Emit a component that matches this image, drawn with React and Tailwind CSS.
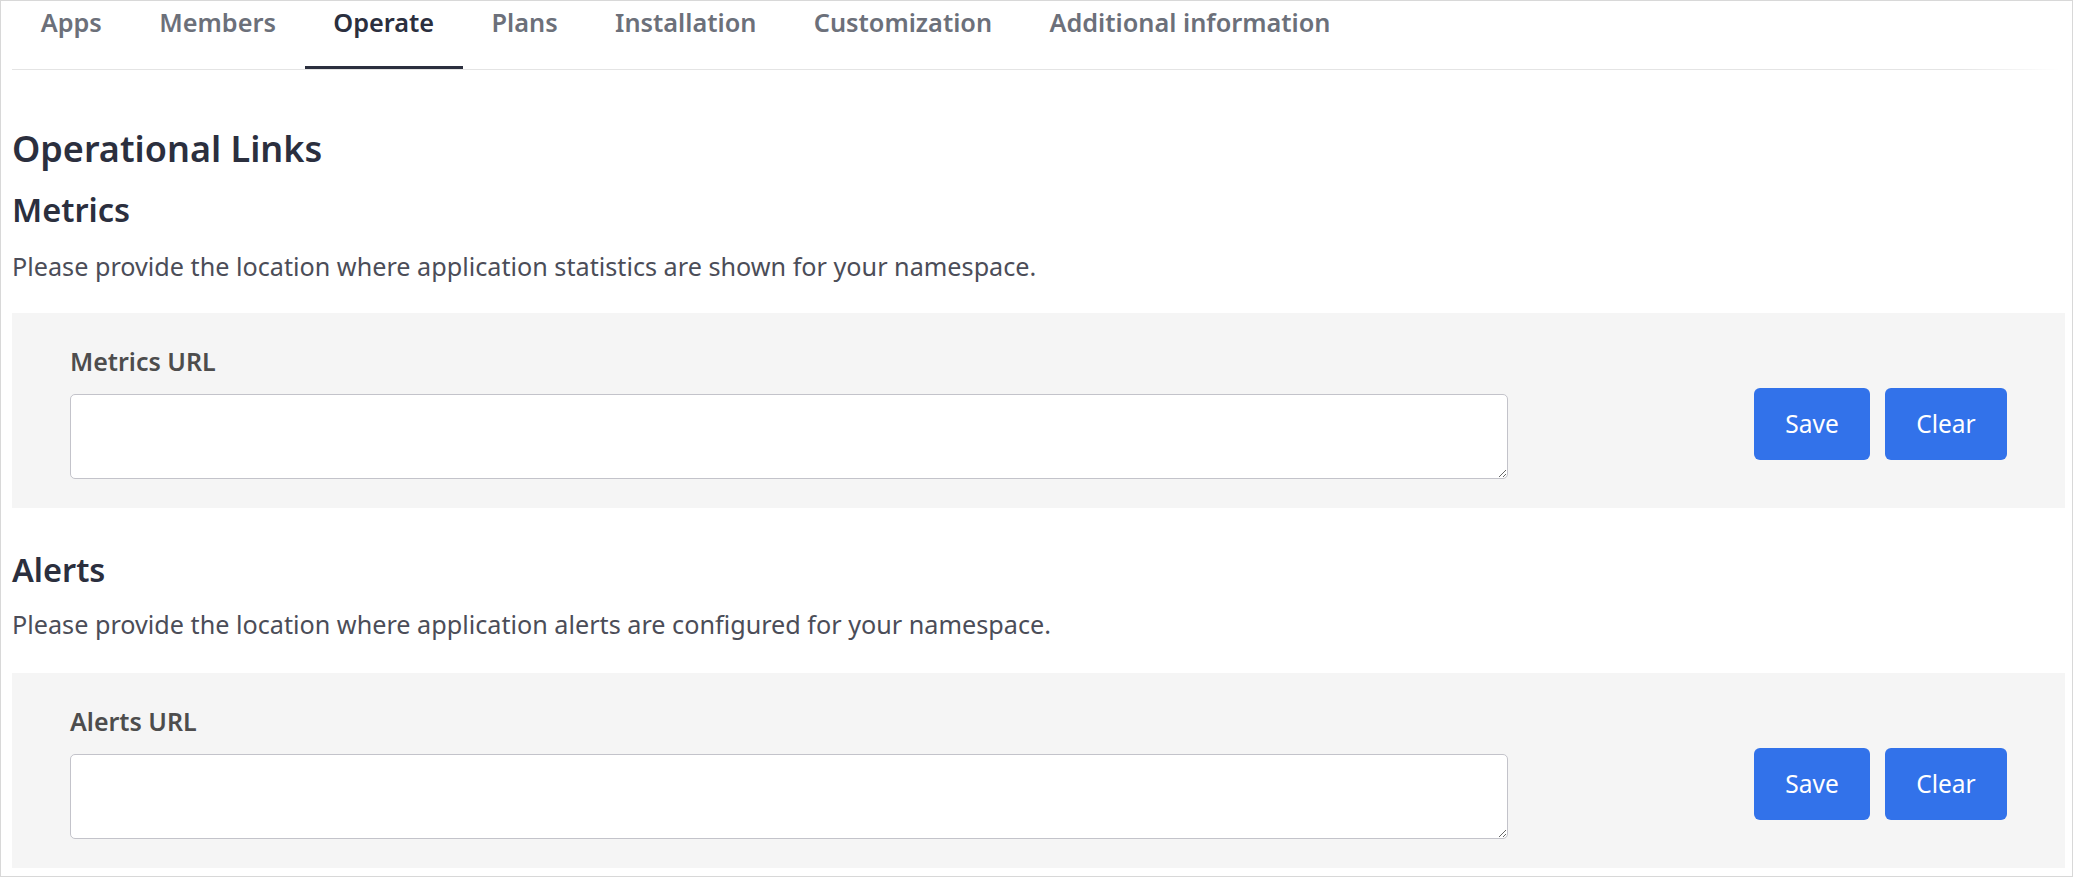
import React from "react";

const tabs = ["Apps", "Members", "Operate", "Plans", "Installation", "Customization", "Additional information"];

function Panel({ label }) {
  return (
    <div className="flex bg-[#f5f5f5] h-[195px] px-[58px]">
      <div className="flex flex-col pt-[34px]">
        <label className="text-[25px] leading-[28px] font-semibold text-[#4d4d4d]">{label}</label>
        <textarea className="mt-[19px] w-[1438px] h-[85px] bg-white border border-[#c3c3ca] rounded-[5px] outline-none" />
      </div>
      <div className="ml-auto flex gap-[15px] pt-[75px]">
        <button className="h-[72px] w-[116px] rounded-[6px] bg-[#3272ea] text-white text-[24.5px]">Save</button>
        <button className="h-[72px] w-[122px] rounded-[6px] bg-[#3272ea] text-white text-[24.5px]">Clear</button>
      </div>
    </div>
  );
}

export default function App() {
  return (
    <div
      className="w-[2073px] h-[877px] border border-[#d8d8d8] bg-white pl-[11px] pr-[7px] overflow-hidden"
      style={{ fontFamily: '"Noto Sans", "Open Sans", sans-serif' }}
    >
      <div className="flex h-[68px]">
        {tabs.map((t) => (
          <div
            key={t}
            className={
              "px-[28.7px] pt-[5px] h-[68px] text-[25.3px] leading-[32px] font-semibold border-b-[3px] " +
              (t === "Operate" ? "text-[#2b2f3e] border-[#2b2f3e]" : "text-[#6c707a] border-transparent")
            }
          >
            {t}
          </div>
        ))}
      </div>
      <div className="h-px w-[2048px] bg-gradient-to-r from-[#e4e4e4] from-95% to-transparent" />
      <h2 className="mt-[59px] text-[36px] leading-[40px] font-semibold text-[#2b2f3e]">Operational Links</h2>
      <h3 className="mt-[23px] text-[32.5px] leading-[36px] font-semibold text-[#2b2f3e]">Metrics</h3>
      <p className="mt-[22px] text-[25.2px] leading-[32px] text-[#4b4d58]">
        Please provide the location where application statistics are shown for your namespace.
      </p>
      <div className="mt-[31px]">
        <Panel label="Metrics URL" />
      </div>
      <h3 className="mt-[44px] text-[32.5px] leading-[36px] font-semibold text-[#2b2f3e]">Alerts</h3>
      <p className="mt-[20px] text-[25.2px] leading-[32px] text-[#4b4d58]">
        Please provide the location where application alerts are configured for your namespace.
      </p>
      <div className="mt-[33px]">
        <Panel label="Alerts URL" />
      </div>
    </div>
  );
}
